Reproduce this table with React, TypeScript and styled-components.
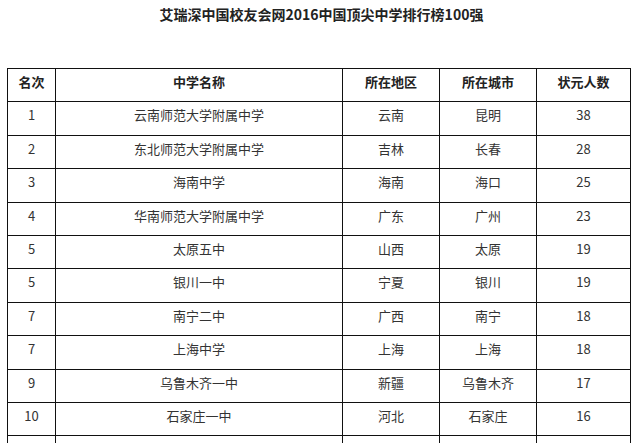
import React from 'react';
import styled, { createGlobalStyle } from 'styled-components';

const GlobalStyle = createGlobalStyle`
  html, body {
    margin: 0;
    padding: 0;
    background: #fff;
  }
  body {
    font-family: "Noto Sans CJK SC", "Liberation Sans", sans-serif;
    color: #333;
  }
`;

const Page = styled.div`
  width: 640px;
  height: 443px;
  overflow: hidden;
  display: flex;
  flex-direction: column;
  padding: 4px 0 0 7px;
  box-sizing: border-box;
`;

const Title = styled.h1`
  margin: 0;
  align-self: center;
  font-size: 14px;
  line-height: 20px;
  font-weight: 700;
  color: #222;
  padding-right: 4px;
`;

const Table = styled.table`
  margin-top: 44px;
  width: 623px;
  border-collapse: collapse;
  table-layout: fixed;
`;

const Cell = styled.td<{ head?: boolean }>`
  border: 1px solid #111;
  height: 33.4px;
  box-sizing: border-box;
  padding: 4px 0 0;
  text-align: center;
  vertical-align: top;
  font-size: 13px;
  line-height: 18px;
  font-weight: ${(p) => (p.head ? 700 : 400)};
  color: ${(p) => (p.head ? '#222' : '#333')};
  white-space: nowrap;
`;

type Row = [string, string, string, string, string];

const columns = [48, 287, 97, 97, 94];
const header: Row = ['名次', '中学名称', '所在地区', '所在城市', '状元人数'];

const rows: Row[] = [
  ['1', '云南师范大学附属中学', '云南', '昆明', '38'],
  ['2', '东北师范大学附属中学', '吉林', '长春', '28'],
  ['3', '海南中学', '海南', '海口', '25'],
  ['4', '华南师范大学附属中学', '广东', '广州', '23'],
  ['5', '太原五中', '山西', '太原', '19'],
  ['5', '银川一中', '宁夏', '银川', '19'],
  ['7', '南宁二中', '广西', '南宁', '18'],
  ['7', '上海中学', '上海', '上海', '18'],
  ['9', '乌鲁木齐一中', '新疆', '乌鲁木齐', '17'],
  ['10', '石家庄一中', '河北', '石家庄', '16'],
  ['', '', '', '', ''],
];

export default function App() {
  return (
    <>
      <GlobalStyle />
      <Page>
        <Title>艾瑞深中国校友会网2016中国顶尖中学排行榜100强</Title>
        <Table>
          <colgroup>
            {columns.map((w, i) => (
              <col key={i} style={{ width: w }} />
            ))}
          </colgroup>
          <thead>
            <tr>
              {header.map((h) => (
                <Cell as="th" head key={h}>
                  {h}
                </Cell>
              ))}
            </tr>
          </thead>
          <tbody>
            {rows.map((r, i) => (
              <tr key={i}>
                {r.map((c, j) => (
                  <Cell key={j}>{c}</Cell>
                ))}
              </tr>
            ))}
          </tbody>
        </Table>
      </Page>
    </>
  );
}
